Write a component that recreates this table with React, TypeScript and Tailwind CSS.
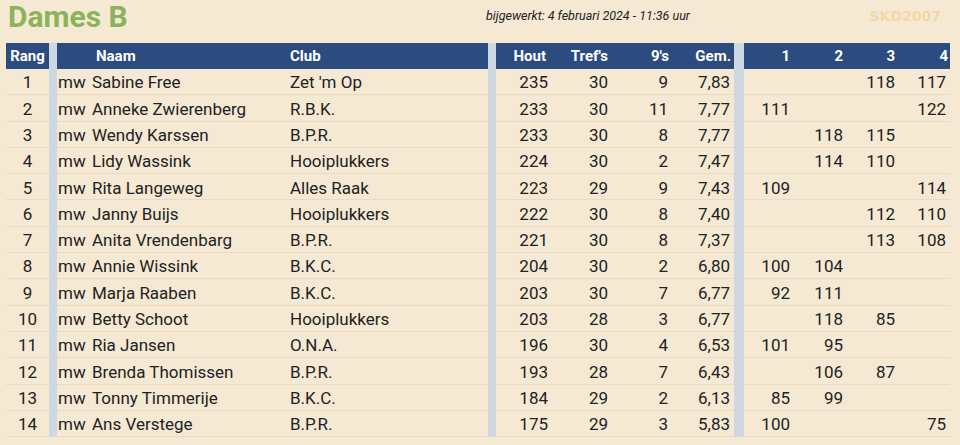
import { Fragment } from "react";

const rows = [
  { rang: 1, naam: "Sabine Free", club: "Zet 'm Op", hout: 235, tref: 30, negen: 9, gem: "7,83", r: ["", "", "118", "117"] },
  { rang: 2, naam: "Anneke Zwierenberg", club: "R.B.K.", hout: 233, tref: 30, negen: 11, gem: "7,77", r: ["111", "", "", "122"] },
  { rang: 3, naam: "Wendy Karssen", club: "B.P.R.", hout: 233, tref: 30, negen: 8, gem: "7,77", r: ["", "118", "115", ""] },
  { rang: 4, naam: "Lidy Wassink", club: "Hooiplukkers", hout: 224, tref: 30, negen: 2, gem: "7,47", r: ["", "114", "110", ""] },
  { rang: 5, naam: "Rita Langeweg", club: "Alles Raak", hout: 223, tref: 29, negen: 9, gem: "7,43", r: ["109", "", "", "114"] },
  { rang: 6, naam: "Janny Buijs", club: "Hooiplukkers", hout: 222, tref: 30, negen: 8, gem: "7,40", r: ["", "", "112", "110"] },
  { rang: 7, naam: "Anita Vrendenbarg", club: "B.P.R.", hout: 221, tref: 30, negen: 8, gem: "7,37", r: ["", "", "113", "108"] },
  { rang: 8, naam: "Annie Wissink", club: "B.K.C.", hout: 204, tref: 30, negen: 2, gem: "6,80", r: ["100", "104", "", ""] },
  { rang: 9, naam: "Marja Raaben", club: "B.K.C.", hout: 203, tref: 30, negen: 7, gem: "6,77", r: ["92", "111", "", ""] },
  { rang: 10, naam: "Betty Schoot", club: "Hooiplukkers", hout: 203, tref: 28, negen: 3, gem: "6,77", r: ["", "118", "85", ""] },
  { rang: 11, naam: "Ria Jansen", club: "O.N.A.", hout: 196, tref: 30, negen: 4, gem: "6,53", r: ["101", "95", "", ""] },
  { rang: 12, naam: "Brenda Thomissen", club: "B.P.R.", hout: 193, tref: 28, negen: 7, gem: "6,43", r: ["", "106", "87", ""] },
  { rang: 13, naam: "Tonny Timmerije", club: "B.K.C.", hout: 184, tref: 29, negen: 2, gem: "6,13", r: ["85", "99", "", ""] },
  { rang: 14, naam: "Ans Verstege", club: "B.P.R.", hout: 175, tref: 29, negen: 3, gem: "5,83", r: ["100", "", "", "75"] },
];

const cell = "flex h-[26.3px] items-center pt-[3px] border-b border-[#e8dbc2]";
const num = `${cell} justify-end pr-1`;
const head = "flex h-[26px] items-center bg-[#2c4b7e] text-[15px] font-bold text-white";
const sep = "bg-[#cdd8e3]";

export default function App() {
  return (
    <div className="h-[445px] w-[960px] overflow-hidden bg-[#f5e9d4] font-['Roboto',sans-serif] text-[#222]">
      <div className="flex h-[43px] items-start">
        <h1 className="w-[486px] pl-2 pt-[1px] text-[30px] font-bold leading-[32px] text-[#8cb35c]">Dames B</h1>
        <p className="pt-[7px] text-[12.5px] italic text-[#222]">bijgewerkt: 4 februari 2024 - 11:36 uur</p>
        <p className="ml-auto pr-[19px] pt-[6px] font-['DejaVu_Sans',sans-serif] text-[14px] font-bold text-[#f2d8a9]">SKD2007</p>
      </div>

      <div className="ml-[6px] grid grid-cols-[43px_8px_35px_198px_198px_8px_56px_60px_60px_62px_10px_50px_53px_52px_51px] text-[17px]">
        <div className={`${head} justify-center`}>Rang</div>
        <div className={sep} />
        <div className={`${head} col-span-2 pl-[39px]`}>Naam</div>
        <div className={head}>Club</div>
        <div className={sep} />
        <div className={`${head} justify-end pr-[6px]`}>Hout</div>
        <div className={`${head} justify-end pr-1`}>Tref's</div>
        <div className={`${head} justify-end pr-[3px]`}>9's</div>
        <div className={`${head} justify-end pr-[3px]`}>Gem.</div>
        <div className={sep} />
        <div className={`${head} justify-end pr-1`}>1</div>
        <div className={`${head} justify-end pr-1`}>2</div>
        <div className={`${head} justify-end pr-1`}>3</div>
        <div className={`${head} justify-end pr-[2px]`}>4</div>

        {rows.map((p) => (
          <Fragment key={p.rang}>
            <div className={`${cell} justify-center`}>{p.rang}</div>
            <div className={sep} />
            <div className={`${cell} pl-px`}>mw</div>
            <div className={cell}>{p.naam}</div>
            <div className={cell}>{p.club}</div>
            <div className={sep} />
            <div className={num}>{p.hout}</div>
            <div className={num}>{p.tref}</div>
            <div className={num}>{p.negen}</div>
            <div className={num}>{p.gem}</div>
            <div className={sep} />
            {p.r.map((v, i) => (
              <div key={i} className={num}>{v}</div>
            ))}
          </Fragment>
        ))}
      </div>
    </div>
  );
}
